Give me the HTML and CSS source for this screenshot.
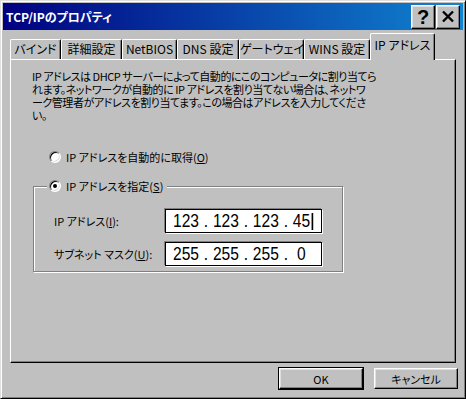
FILE: index.html
```html
<!DOCTYPE html>
<html lang="ja">
<head>
  <meta charset="UTF-8">
  <title>TCP/IPのプロパティ</title>
  <link rel="stylesheet" href="styles.css">
</head>
<body>
  <div class="window">
    <div class="titlebar">
      <span class="title">TCP/IPのプロパティ</span>
      <div class="title-buttons">
        <button class="tbtn help">?</button>
        <button class="tbtn close">
          <svg width="14" height="13" viewBox="0 0 14 13">
            <path d="M2 1.5 L12 11.5 M12 1.5 L2 11.5" stroke="#000" stroke-width="2.4" fill="none"/>
          </svg>
        </button>
      </div>
    </div>

    <div class="tabs">
      <div class="tab tab-bind">バインド</div>
      <div class="tab tab-adv">詳細設定</div>
      <div class="tab tab-netbios">NetBIOS</div>
      <div class="tab tab-dns">DNS 設定</div>
      <div class="tab tab-gw">ゲートウェイ</div>
      <div class="tab tab-wins">WINS 設定</div>
      <div class="tab tab-ip active">IP アドレス</div>
    </div>

    <div class="panel">
      <p class="intro">IP アドレスは DHCP サーバーによって自動的にこのコンピュータに割り当てら<br>れます。ネットワークが自動的に IP アドレスを割り当てない場合は、ネットワ<br>ーク管理者がアドレスを割り当てます。この場合はアドレスを入力してくださ<br>い。</p>

      <div class="radio-row auto">
        <span class="radio"></span>
        <span>IP アドレスを自動的に取得(<u>O</u>)</span>
      </div>

      <div class="group">
        <div class="group-legend">
          <span class="radio checked"></span>
          <span>IP アドレスを指定(<u>S</u>)</span>
        </div>
        <div class="fields">
          <div class="field-row">
            <span class="field-label">IP アドレス(<u>I</u>):</span>
            <div class="ipbox">
              <div class="iptext">
                <span>123</span><span class="dot">.</span><span>123</span><span class="dot">.</span><span>123</span><span class="dot">.</span><span>45</span><span class="caret"></span>
              </div>
            </div>
          </div>
          <div class="field-row">
            <span class="field-label">サブネット マスク(<u>U</u>):</span>
            <div class="ipbox">
              <div class="iptext">
                <span>255</span><span class="dot">.</span><span>255</span><span class="dot">.</span><span>255</span><span class="dot">.</span><span class="last">0</span>
              </div>
            </div>
          </div>
        </div>
      </div>
    </div>

    <div class="actions">
      <button class="btn default">OK</button>
      <button class="btn">キャンセル</button>
    </div>
  </div>
</body>
</html>
```

FILE: styles.css
```css
* {
  box-sizing: border-box;
}
body {
  margin: 0;
  background: #c0c0c0;
  font-family: "Noto Sans CJK JP", sans-serif;
  font-size: 11px;
  font-feature-settings: "palt";
  color: #000;
}
u {
  text-decoration: underline;
  text-underline-offset: 1px;
}

.window {
  width: 466px;
  height: 399px;
  padding: 2px;
  background: #c0c0c0;
  border: 1px solid;
  border-color: #dfdfdf #000 #000 #dfdfdf;
  box-shadow: inset 1px 1px #fff, inset -1px -1px #808080;
}

.titlebar {
  height: 27px;
  display: flex;
  align-items: center;
  padding: 0 3px 0 3px;
  background: linear-gradient(to right, #000080, #1084d0);
}
.title {
  color: #fff;
  font-weight: bold;
  font-size: 12px;
}
.title-buttons {
  margin-left: auto;
  display: flex;
  gap: 1px;
}
.tbtn {
  width: 24px;
  height: 24px;
  padding: 0;
  display: flex;
  align-items: center;
  justify-content: center;
  background: #c0c0c0;
  border: 1px solid;
  border-color: #fff #000 #000 #fff;
  box-shadow: inset -1px -1px #808080, inset 1px 1px #dfdfdf;
}
.help {
  font-family: "Liberation Sans", sans-serif;
  font-weight: bold;
  font-size: 20px;
  line-height: 1;
}

.tabs {
  height: 26px;
  margin: 3px 0 0 7px;
  display: flex;
  align-items: flex-end;
  font-size: 12px;
}
.tab {
  height: 20px;
  line-height: 18px;
  text-align: center;
  white-space: nowrap;
  background: #c0c0c0;
  border-top: 1px solid #fff;
  border-left: 1px solid #fff;
  border-right: 1px solid #000;
  border-radius: 2px 2px 0 0;
  box-shadow: inset -1px 0 #808080;
}
.tab-bind { width: 51px; }
.tab-adv { width: 61px; }
.tab-netbios { width: 55px; }
.tab-dns { width: 62px; }
.tab-gw { width: 65px; }
.tab-wins { width: 66px; }
.tab-ip { width: 65px; }
.tab.active {
  height: 27px;
  line-height: 22px;
  margin-bottom: -1px;
  position: relative;
  z-index: 2;
}

.panel {
  height: 304px;
  margin: 0 7px;
  padding: 10px 0 0 21px;
  border: 1px solid;
  border-color: #fff #000 #000 #fff;
  box-shadow: inset -1px -1px #808080;
}
.intro {
  margin: 0;
  line-height: 13px;
  white-space: nowrap;
  letter-spacing: -0.45px;
}

.radio-row {
  display: flex;
  align-items: center;
  gap: 5px;
  height: 16px;
  white-space: nowrap;
}
.auto {
  margin-top: 27px;
  padding-left: 17px;
}
.radio {
  width: 12px;
  height: 12px;
  border-radius: 50%;
  background: #fff;
  border: 1px solid;
  border-color: #808080 #fff #fff #808080;
  box-shadow: inset 1px 1px #000, inset -1px -1px #dfdfdf;
  display: flex;
  align-items: center;
  justify-content: center;
}
.radio.checked::after {
  content: "";
  width: 4px;
  height: 4px;
  border-radius: 50%;
  background: #000;
}

.group {
  width: 310px;
  margin: 21px 0 0 1px;
  padding: 0 0 5px 20px;
  border: 1px solid #808080;
  box-shadow: inset 1px 1px #fff, 1px 1px #fff;
}
.group-legend {
  display: flex;
  align-items: center;
  gap: 5px;
  width: max-content;
  height: 16px;
  margin: -9px 0 0 -7px;
  padding: 0 4px 0 2px;
  background: #c0c0c0;
  white-space: nowrap;
}
.fields {
  margin-top: 15px;
  display: flex;
  flex-direction: column;
  gap: 9px;
}
.field-row {
  display: flex;
  align-items: center;
}
.field-label {
  width: 111px;
  white-space: nowrap;
}
.ipbox {
  width: 157px;
  height: 24px;
  padding-left: 7px;
  display: flex;
  align-items: center;
  overflow: hidden;
  background: #fff;
  border: 1px solid #000;
  box-shadow: -1px -1px #808080, 1px 1px #fff;
}
.iptext {
  display: flex;
  align-items: center;
  transform: scaleX(0.82);
  transform-origin: left center;
  font-family: "Liberation Sans", sans-serif;
  font-size: 19px;
  font-feature-settings: normal;
  white-space: nowrap;
}
.dot {
  width: 17px;
  text-align: center;
}
.last {
  margin-left: 5px;
}
.caret {
  width: 2px;
  height: 17px;
  margin-left: 2px;
  background: #000;
}

.actions {
  display: flex;
  justify-content: flex-end;
  gap: 11px;
  margin-top: 5px;
  padding-right: 5px;
}
.btn {
  width: 84px;
  height: 21px;
  padding: 0;
  background: #c0c0c0;
  border: 1px solid;
  border-color: #fff #000 #000 #fff;
  box-shadow: inset -1px -1px #808080, inset 1px 1px #dfdfdf;
  font-family: "Noto Sans CJK JP", sans-serif;
  font-size: 11px;
  font-feature-settings: "palt";
  color: #000;
}
.btn.default {
  outline: 1px solid #000;
}
```
